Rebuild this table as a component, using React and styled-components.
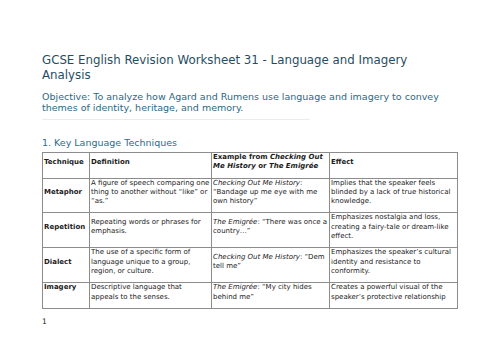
import styled, { createGlobalStyle } from "styled-components";

const GlobalStyle = createGlobalStyle`
    html, body {
        margin: 0;
        padding: 0;
        background: #ffffff;
    }
    body {
        font-family: "DejaVu Sans", "Noto Sans", sans-serif;
    }
`;

const rows = [
    {
        technique: "Metaphor",
        definition: "A figure of speech comparing one thing to another without \u201clike\u201d or \u201cas.\u201d",
        poem: "Checking Out Me History",
        quote: "\u201cBandage up me eye with me own history\u201d",
        effect: "Implies that the speaker feels blinded by a lack of true historical knowledge.",
    },
    {
        technique: "Repetition",
        definition: "Repeating words or phrases for emphasis.",
        poem: "The Emigr\u00e9e",
        quote: "\u201cThere was once a country\u2026\u201d",
        effect: "Emphasizes nostalgia and loss, creating a fairy-tale or dream-like effect.",
    },
    {
        technique: "Dialect",
        definition: "The use of a specific form of language unique to a group, region, or culture.",
        poem: "Checking Out Me History",
        quote: "\u201cDem tell me\u201d",
        effect: "Emphasizes the speaker\u2019s cultural identity and resistance to conformity.",
    },
    {
        technique: "Imagery",
        definition: "Descriptive language that appeals to the senses.",
        poem: "The Emigr\u00e9e",
        quote: "\u201cMy city hides behind me\u201d",
        effect: "Creates a powerful visual of the speaker\u2019s protective relationship",
        split: true,
    },
];

const App = () => {
    return (
        <>
            <GlobalStyle />
            <Page>
                <Title>GCSE English Revision Worksheet 31 - Language and Imagery Analysis</Title>
                <Objective>
                    Objective: To analyze how Agard and Rumens use language and imagery to convey themes of identity, heritage, and memory.
                </Objective>
                <Rule />
                <SectionHeading>1. Key Language Techniques</SectionHeading>
                <Table>
                    <colgroup>
                        <col style={{ width: 47 }} />
                        <col style={{ width: 122 }} />
                        <col style={{ width: 118 }} />
                        <col style={{ width: 128 }} />
                    </colgroup>
                    <thead>
                        <tr>
                            <Th>Technique</Th>
                            <Th>Definition</Th>
                            <Th>
                                Example from <em>Checking Out Me History</em> or <em>The Emigr&eacute;e</em>
                            </Th>
                            <Th>Effect</Th>
                        </tr>
                    </thead>
                    <tbody>
                        {rows.map((r) => (
                            <tr key={r.technique}>
                                <Td $bold $top={r.split}>{r.technique}</Td>
                                <Td $top={r.split}>{r.definition}</Td>
                                <Td $top={r.split}>
                                    <em>{r.poem}</em>: {r.quote}
                                </Td>
                                <Td $top={r.split}>{r.effect}</Td>
                            </tr>
                        ))}
                    </tbody>
                </Table>
                <PageNumber>1</PageNumber>
            </Page>
        </>
    );
};

export default App;

const Page = styled.div`
    width: 415px;
    padding: 53px 0 20px 42px;
`;

const Title = styled.h1`
    width: 405px;
    margin: 0;
    font-size: 11.8px;
    line-height: 15px;
    font-weight: normal;
    color: #1f4e63;
`;

const Objective = styled.p`
    width: 405px;
    margin: 7.5px 0 0;
    font-size: 9.5px;
    line-height: 11px;
    color: #2d6985;
`;

const Rule = styled.div`
    width: 268px;
    height: 1px;
    margin-top: 6.5px;
    background: #ececec;
`;

const SectionHeading = styled.h2`
    margin: 17.3px 0 0;
    font-size: 9.5px;
    line-height: 12px;
    font-weight: normal;
    color: #2e6c8a;
`;

const Table = styled.table`
    margin-top: 2.7px;
    width: 415px;
    table-layout: fixed;
    border-collapse: collapse;
    font-size: 7px;
    line-height: 9.3px;
    color: #1b1b1b;
`;

const Th = styled.th`
    border: 1px solid #8c8c8c;
    padding: 0 0 6px 1px;
    text-align: left;
    vertical-align: middle;
    font-weight: bold;
`;

const Td = styled.td`
    border: 1px solid #8c8c8c;
    padding: 0 0 6px 1px;
    text-align: left;
    vertical-align: ${(p) => (p.$top ? "top" : "middle")};
    font-weight: ${(p) => (p.$bold ? "bold" : "normal")};
`;

const PageNumber = styled.div`
    margin-top: 8px;
    font-size: 7.5px;
    line-height: 10px;
    color: #1b1b1b;
`;
